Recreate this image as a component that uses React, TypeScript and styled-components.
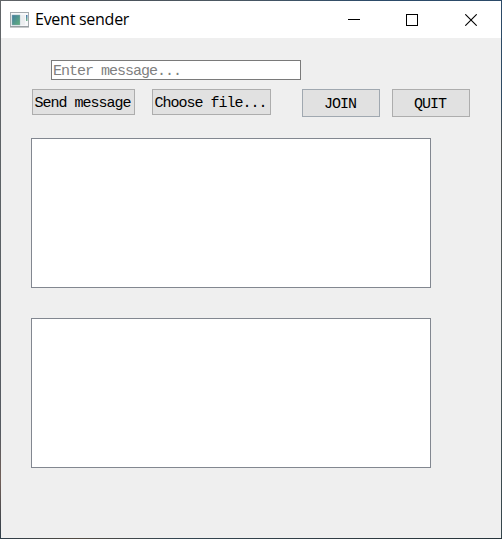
import React from "react";
import styled, { createGlobalStyle } from "styled-components";

const GlobalStyle = createGlobalStyle`
  *, *::before, *::after { box-sizing: border-box; }
  html, body { margin: 0; padding: 0; overflow: hidden; }
`;

const Desktop = styled.div`
  width: 502px;
  height: 539px;
  padding: 1px;
  background:
    linear-gradient(90deg, #626568, #4b5259 15%, #4c5862 45%, #2c4b69 75%, #2b4a68) top / 100% 1px no-repeat,
    linear-gradient(90deg, #2d3c48, #514b43 15%, #344551 35%, #303c43 70%, #26333a) bottom / 100% 1px no-repeat,
    linear-gradient(#2b4a68, #2e4a62 18%, #4d5050 26%, #535c5e 60%, #33444a) right / 1px 100% no-repeat,
    linear-gradient(#626568, #5b6165 40%, #555a61 80%, #715f58 89%, #2d3c48) left / 1px 100% no-repeat;
`;

const Window = styled.main`
  width: 500px;
  height: 537px;
  background: #efefef;
`;

const TitleBar = styled.header`
  display: flex;
  align-items: center;
  height: 37px;
  padding-left: 9px;
  background: #fff;
`;

const AppIcon = styled.svg`
  display: block;
  flex: none;
`;

const Title = styled.h1`
  flex: 1;
  margin: 0 0 1px 6px;
  color: #000;
  font: 400 16px/22px "Open Sans", "Noto Sans", sans-serif;
  letter-spacing: -0.26px;
  white-space: nowrap;
`;

const CaptionButton = styled.button<{ $width?: number }>`
  display: grid;
  place-items: center;
  width: ${({ $width }) => $width ?? 58}px;
  height: 37px;
  padding: 0;
  border: 0;
  background: transparent;
`;

const Content = styled.section`
  display: flex;
  flex-direction: column;
  align-items: flex-start;
  padding: 22px 30px 0;
`;

const MessageInput = styled.input`
  width: 250px;
  height: 20px;
  margin-left: 20px;
  padding: 2px 1px 0;
  border: 1px solid #7a7a7a;
  border-radius: 0;
  outline: 0;
  background: #fff;
  font: 15px/16px "Liberation Mono", monospace;
  letter-spacing: -1px;

  &::placeholder {
    color: #808080;
    opacity: 1;
  }
`;

const ButtonRow = styled.div`
  display: flex;
  align-items: flex-start;
  height: 28px;
  margin: 9px 0 21px 1px;
`;

const PushButton = styled.button<{ $width: number; $height: number; $gap?: number; $border?: string }>`
  flex: none;
  width: ${({ $width }) => $width}px;
  height: ${({ $height }) => $height}px;
  margin: 0 ${({ $gap }) => $gap ?? 0}px 0 0;
  padding: 3px 2px 0 0;
  border: 1px solid ${({ $border }) => $border ?? "#adadad"};
  border-radius: 0;
  background: #e1e1e1;
  color: #000;
  font: 15px/16px "Liberation Mono", monospace;
  letter-spacing: -1px;
  white-space: nowrap;
`;

const OutputBox = styled.div`
  width: 400px;
  height: 150px;
  border: 1px solid #828790;
  background: #fff;

  & + & {
    margin-top: 30px;
  }
`;

export default function App() {
  return (
    <>
      <GlobalStyle />
      <Desktop>
        <Window>
          <TitleBar>
            <AppIcon width="19" height="16" viewBox="0 0 19 16" aria-hidden="true">
              <defs>
                <linearGradient id="pane" x1="0" y1="0" x2="1" y2="1">
                  <stop offset="0" stopColor="#417ba0" />
                  <stop offset="1" stopColor="#62b27b" />
                </linearGradient>
                <linearGradient id="strip" x1="0" y1="0" x2="0" y2="1">
                  <stop offset="0" stopColor="#4574ae" />
                  <stop offset="1" stopColor="#75b98d" />
                </linearGradient>
              </defs>
              <rect x="0.5" y="0.5" width="18" height="14" fill="#f7f8fa" stroke="#a4aaae" />
              <path d="M0 15h19" stroke="#8e9498" />
              <rect x="2" y="3" width="8" height="10" fill="url(#pane)" stroke="#8babb3" strokeWidth="0.5" />
              <rect x="11" y="3" width="4" height="10" fill="#eceef0" />
              <rect x="16" y="3" width="1.5" height="6" fill="url(#strip)" />
            </AppIcon>
            <Title>Event sender</Title>
            <CaptionButton aria-label="Minimize">
              <svg width="12" height="12" viewBox="0 0 12 12" shapeRendering="crispEdges">
                <path d="M0 5.5h12" stroke="#000" />
              </svg>
            </CaptionButton>
            <CaptionButton aria-label="Maximize">
              <svg width="12" height="12" viewBox="0 0 12 12" shapeRendering="crispEdges">
                <rect x="0.5" y="0.5" width="11" height="11" fill="none" stroke="#000" />
              </svg>
            </CaptionButton>
            <CaptionButton $width={60} aria-label="Close">
              <svg width="12" height="12" viewBox="0 0 12 12">
                <path d="M0.3 0.3l11.4 11.4M11.7 0.3L0.3 11.7" stroke="#000" strokeWidth="1.1" />
              </svg>
            </CaptionButton>
          </TitleBar>
          <Content>
            <MessageInput placeholder="Enter message..." />
            <ButtonRow>
              <PushButton $width={103} $height={26} $gap={17}>Send message</PushButton>
              <PushButton $width={119} $height={26} $gap={31}>Choose file...</PushButton>
              <PushButton $width={78} $height={28} $gap={12} $border="#a0a8b0">JOIN</PushButton>
              <PushButton $width={78} $height={28}>QUIT</PushButton>
            </ButtonRow>
            <OutputBox />
            <OutputBox />
          </Content>
        </Window>
      </Desktop>
    </>
  );
}
